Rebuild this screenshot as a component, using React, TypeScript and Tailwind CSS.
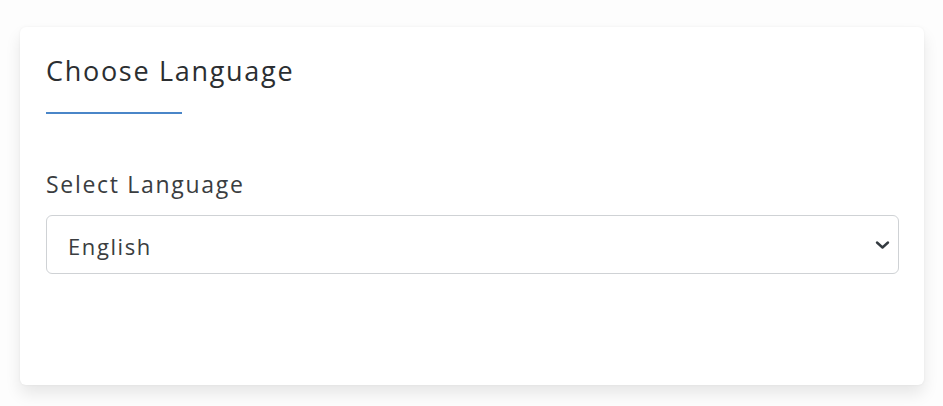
import React from "react";

export default function App() {
  return (
    <div className="min-h-[406px] w-[943px] bg-[#fdfdfd] pt-[27px] pl-[20px] pr-[19px]" style={{ fontFamily: '"Open Sans", "Noto Sans", sans-serif' }}>
      <div className="h-[358px] rounded-[6px] bg-white px-[26px] pt-[28px] shadow-[0_9px_16px_rgba(0,0,0,0.09),0_0_3px_rgba(0,0,0,0.05)]">
        <h2 className="text-[27px] leading-[32px] text-[#2b2e31] tracking-[1.7px]">Choose Language</h2>
        <div className="mt-[25px] h-[2px] w-[136px] bg-[#4a86c8]" />
        <div className="mt-[56px] text-[23px] leading-[28px] text-[#3a3d40] tracking-[1.7px]">Select Language</div>
        <div className="mt-[17px] flex h-[59px] w-[853px] items-center justify-between rounded-[6px] border border-[#cfd2d5] bg-white pl-[21px] pr-[8px]">
          <span className="pt-[3px] text-[22px] leading-[28px] text-[#3a3d40] tracking-[1.6px]">English</span>
          <svg width="15" height="10" viewBox="0 0 15 10" fill="none">
            <path d="M2 2.5 L7.5 7.5 L13 2.5" stroke="#343a40" strokeWidth="2.4" strokeLinecap="round" strokeLinejoin="round" />
          </svg>
        </div>
      </div>
    </div>
  );
}
